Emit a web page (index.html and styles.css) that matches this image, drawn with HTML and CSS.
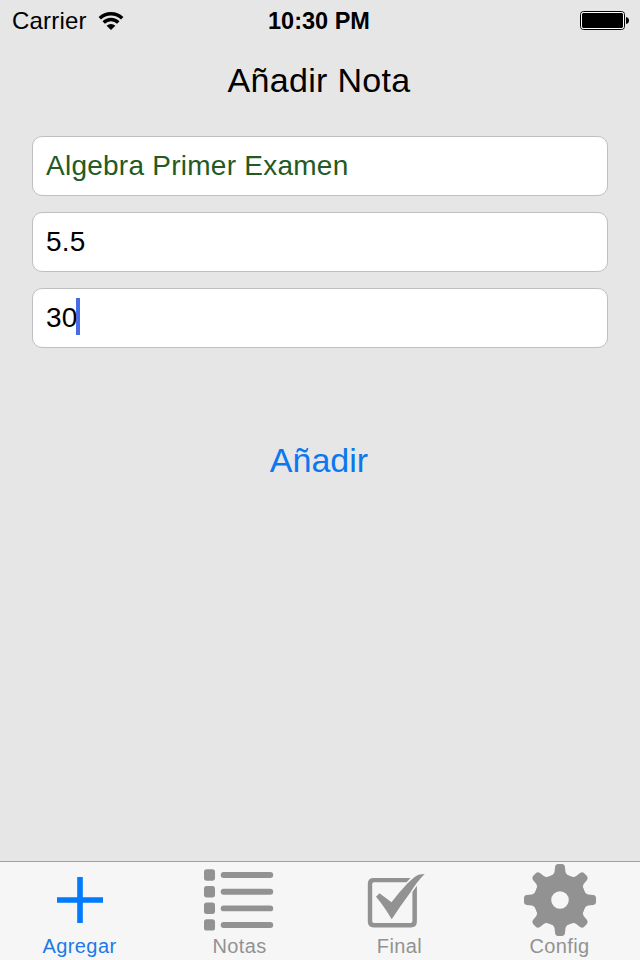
FILE: index.html
```html
<!DOCTYPE html>
<html lang="es">
<head>
<meta charset="utf-8">
<title>Añadir Nota</title>
<link rel="stylesheet" href="styles.css">
</head>
<body>
<div class="screen">
  <header class="status">
    <div class="carrier">
      <span>Carrier</span>
      <svg class="wifi" width="26" height="20" viewBox="0 0 26 20" fill="none" stroke="#000" stroke-width="3.4">
        <path d="M1.8 7.3A16 16 0 0 1 24.2 7.3"/>
        <path d="M5.7 11.5A10.3 10.3 0 0 1 20.3 11.5"/>
        <path d="M13 19L8.6 14.7A6.4 6.4 0 0 1 17.4 14.7Z" fill="#000" stroke="none"/>
      </svg>
    </div>
    <span class="time">10:30 PM</span>
    <svg class="battery" width="50" height="20" viewBox="0 0 50 20">
      <rect x=".5" y=".5" width="44" height="18" rx="3" fill="none" stroke="#000"/>
      <rect x="1.5" y="1.5" width="42" height="16" rx="2" fill="#000" stroke="#fff"/>
      <path d="M46 6Q49 6.5 49 9.5T46 13Z"/>
    </svg>
  </header>
  <h1 class="title">Añadir Nota</h1>
  <main class="form">
    <div class="field subject">Algebra Primer Examen</div>
    <div class="field">5.5</div>
    <div class="field">30<span class="caret"></span></div>
  </main>
  <button class="add">Añadir</button>
  <nav class="tabs">
    <a class="tab active">
      <svg width="80" height="72" viewBox="0 0 80 72"><path d="M37.2 13h5.6v20.2H63v5.6H42.8V59h-5.6V38.8H17v-5.6h20.2z"/></svg>
      <span>Agregar</span>
    </a>
    <a class="tab">
      <svg width="80" height="72" viewBox="0 0 80 72">
        <g><rect x="4" y="5.3" width="11" height="11.4" rx="2.7"/><rect x="4" y="22" width="11" height="11.4" rx="2.7"/><rect x="4" y="38.6" width="11" height="11.4" rx="2.7"/><rect x="4" y="55.2" width="11" height="11.4" rx="2.7"/></g>
        <g><rect x="20.7" y="8.1" width="52.5" height="5.9" rx="2.9"/><rect x="20.7" y="24.8" width="52.5" height="5.9" rx="2.9"/><rect x="20.7" y="41.4" width="52.5" height="5.9" rx="2.9"/><rect x="20.7" y="58" width="52.5" height="5.9" rx="2.9"/></g>
      </svg>
      <span>Notas</span>
    </a>
    <a class="tab">
      <svg width="80" height="72" viewBox="0 0 80 72">
        <path d="M50.5 14L46.5 18.3H14Q12.2 18.3 12.2 20V57.2Q12.2 59 14 59H50.6Q52.4 59 52.4 57.2V28L56.9 21.7V57.5Q56.9 63.4 51 63.4H13.7Q7.8 63.4 7.8 57.5V19.9Q7.8 14 13.7 14Z"/>
        <path d="M16 32.7L19.5 29.2L31.5 38.3Q38 29.5 46.7 20.3Q53 13.8 56.7 11.7Q59 10 64.7 10Q57 17.5 50 29Q41 41 31.7 55.3Q24 42 16 32.7Z"/>
      </svg>
      <span>Final</span>
    </a>
    <a class="tab">
      <svg width="80" height="72" viewBox="0 0 80 72">
        <defs><path id="tooth" d="M-11.7 -23.3Q-6.3 -24.6 -5.5 -28L-4.9 -33.3Q-4.5 -36 -1.8 -36H1.8Q4.5 -36 4.9 -33.3L5.5 -28Q6.3 -24.6 11.7 -23.3L0 -15Z"/></defs>
        <g transform="translate(40 36)">
          <circle r="17.3" fill="none" stroke="#929292" stroke-width="17"/>
          <use href="#tooth"/><use href="#tooth" transform="rotate(45)"/><use href="#tooth" transform="rotate(90)"/><use href="#tooth" transform="rotate(135)"/><use href="#tooth" transform="rotate(180)"/><use href="#tooth" transform="rotate(225)"/><use href="#tooth" transform="rotate(270)"/><use href="#tooth" transform="rotate(315)"/>
        </g>
      </svg>
      <span>Config</span>
    </a>
  </nav>
</div>
</body>
</html>
```
FILE: styles.css
```css
* { box-sizing: border-box; }
body { margin: 0; }
.screen {
  width: 640px;
  height: 960px;
  display: flex;
  flex-direction: column;
  background: #e6e6e6;
  color: #000;
  font-family: "Liberation Sans", Arial, sans-serif;
}
.status {
  height: 42px;
  padding: 0 10px 0 12px;
  display: grid;
  grid-template-columns: 309px auto 1fr;
  justify-content: start;
  align-items: center;
  font-size: 24px;
  line-height: 42px;
}
.status { grid-template-columns: 256px 1fr auto; }
.carrier { display: flex; align-items: center; gap: 11px; letter-spacing: .2px; }
.time { font-weight: bold; font-size: 23.5px; }
.title {
  margin: 18px 2px 0 0;
  height: 40px;
  font-size: 34px;
  font-weight: normal;
  line-height: 40px;
  letter-spacing: .3px;
  text-align: center;
}
.form { margin: 36px 32px 0; display: flex; flex-direction: column; gap: 16px; }
.field {
  height: 60px;
  padding: 0 13px;
  display: flex;
  align-items: center;
  background: #fff;
  border: 1px solid #bfbfbf;
  border-radius: 10px;
  font-size: 28px;
  letter-spacing: .25px;
}
.subject { color: #245a22; }
.caret { width: 4px; height: 37px; margin: 0 0 3px -2px; background: #486be6; }
.add {
  margin: 92px auto 0;
  padding: 0 2px 0 0;
  border: 0;
  background: none;
  color: #0b78f0;
  font: 34px/40px "Liberation Sans", Arial, sans-serif;
}
.tabs {
  height: 99px;
  margin-top: auto;
  display: grid;
  grid-template-columns: repeat(4, 160px);
  background: #f6f6f6;
  border-top: 1px solid #a0a0a0;
}
.tab {
  padding-top: 2px;
  display: flex;
  flex-direction: column;
  align-items: center;
  color: #929292;
  fill: #929292;
  font-size: 20px;
  line-height: 22px;
  letter-spacing: .4px;
}
.tab svg { flex: none; display: block; }
.tab span { margin: -1px 1px 0 0; }
.active { color: #2079e8; fill: #007aff; }
```
